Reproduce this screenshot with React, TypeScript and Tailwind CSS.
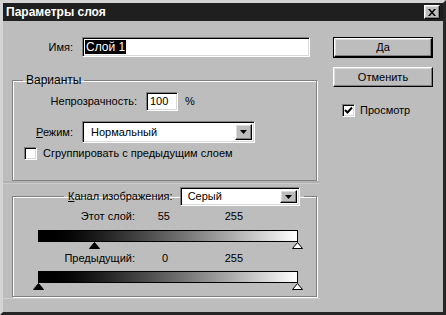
const sunken =
  "border border-t-[#808080] border-l-[#808080] border-r-white border-b-white shadow-[inset_1px_1px_0_#000,inset_-1px_-1px_0_#d8d8d8]";
const raised =
  "border border-t-white border-l-white border-r-black border-b-black shadow-[inset_-1px_-1px_0_#808080,inset_1px_1px_0_#dcdcdc]";
const etched = "border border-[#808080] shadow-[inset_1px_1px_0_#fff,1px_1px_0_#fff]";

function DropArrow() {
  return (
    <div className={`${raised} w-[17px] h-full flex items-center justify-center bg-[#bdbdbd]`}>
      <svg width="7" height="4" viewBox="0 0 7 4">
        <path d="M0 0H7L3.5 4Z" fill="#000" />
      </svg>
    </div>
  );
}

function Thumb({ at, hollow }: { at: number; hollow?: boolean }) {
  return (
    <svg
      className="absolute top-0"
      style={{ left: at - 5 }}
      width="11"
      height="7"
      viewBox="0 0 11 7"
    >
      <path d="M5.5 0.5L10.5 6.5H0.5Z" fill={hollow ? "#fff" : "#000"} stroke="#000" />
    </svg>
  );
}

function Slider({ lo, hi }: { lo: number; hi: number }) {
  return (
    <div className="ml-[25px] w-[260px]">
      <div className="h-[12px] border border-black bg-linear-to-r from-black to-white" />
      <div className="relative h-[7px]">
        <Thumb at={(lo / 255) * 259} />
        <Thumb at={(hi / 255) * 259} hollow />
      </div>
    </div>
  );
}

export default function App() {
  return (
    <div className="w-[446px] h-[315px] bg-[#bdbdbd] border-[3px] border-t-[#d4d4d4] border-l-[#d4d4d4] border-r-[#262626] border-b-[#262626] font-['Liberation_Sans',Arial,sans-serif] text-[11px] leading-[13px] text-black flex flex-col">
      <div className="h-[18px] bg-[#1f1f1f] flex items-center justify-between pl-[3px] pr-[3px]">
        <span className="text-white font-bold text-[12px]">Параметры слоя</span>
        <div className={`${raised} w-[16px] h-[14px] bg-[#bdbdbd] flex items-center justify-center`}>
          <svg width="8" height="7" viewBox="0 0 8 7">
            <path d="M0 0H2L4 2.5L6 0H8L5 3.5L8 7H6L4 4.5L2 7H0L3 3.5Z" fill="#000" />
          </svg>
        </div>
      </div>

      <div className="flex">
        <div className="w-[317px] flex flex-col">
          <div className="mt-[16px] flex items-center">
            <span className="w-[70px] text-right">Имя:</span>
            <div className={`${sunken} ml-[9px] w-[228px] h-[20px] bg-white flex items-center pl-[2px]`}>
              <span className="bg-black text-white px-[1px] leading-[14px] text-[12px]">Слой 1</span>
            </div>
          </div>

          <fieldset className={`${etched} ml-[9px] mt-[17px] w-[305px] pb-[20px]`}>
            <legend className="ml-[10px] px-[3px] text-[12px]">Варианты</legend>
            <div className="mt-[5px] flex items-center">
              <span className="w-[124px] text-right">Непрозрачность:</span>
              <div className={`${sunken} ml-[9px] w-[32px] h-[19px] bg-white flex items-center pl-[3px]`}>
                100
              </div>
              <span className="ml-[7px]">%</span>
            </div>
            <div className="mt-[10px] flex items-center">
              <span className="w-[60px] text-right">
                <span className="underline">Р</span>ежим:
              </span>
              <div className={`${sunken} ml-[9px] w-[173px] h-[22px] bg-white flex items-center justify-between p-[2px]`}>
                <span className="pl-[6px]">Нормальный</span>
                <DropArrow />
              </div>
            </div>
            <div className="mt-[4px] ml-[11px] flex items-center">
              <div className={`${sunken} w-[13px] h-[13px] bg-white`} />
              <span className="ml-[6px]">Сгруппировать с предыдущим слоем</span>
            </div>
          </fieldset>

          <div className="mt-[1px] h-[117px] border-y border-t-[#b2b2b2] border-b-[#cfcfcf] shadow-[inset_0_1px_0_#cacaca,0_-1px_0_#b2b2b2] pl-[9px] pt-[4px]">
            <fieldset className={`${etched} w-[305px] pb-[6px]`}>
              <legend className="ml-[51px] px-[4px] flex items-center">
                <span>
                  <span className="underline">К</span>анал изображения:
                </span>
                <div className={`${sunken} ml-[7px] w-[120px] h-[19px] bg-white flex items-center justify-between p-[2px]`}>
                  <span className="pl-[5px]">Серый</span>
                  <DropArrow />
                </div>
              </legend>
              <div className="mt-[4px] flex">
                <span className="w-[122px] text-right">Этот слой:</span>
                <span className="w-[35px] text-right">55</span>
                <span className="w-[73px] text-right">255</span>
              </div>
              <div className="mt-[7px]">
                <Slider lo={55} hi={255} />
              </div>
              <div className="mt-[3px] flex">
                <span className="w-[122px] text-right">Предыдущий:</span>
                <span className="w-[33px] text-right">0</span>
                <span className="w-[75px] text-right">255</span>
              </div>
              <div className="mt-[6px]">
                <Slider lo={0} hi={255} />
              </div>
            </fieldset>
          </div>
        </div>

        <div className="ml-[13px] w-[100px] flex flex-col">
          <div className="mt-[16px] h-[21px] border border-black">
            <div className={`${raised} h-full flex items-center justify-center`}>Да</div>
          </div>
          <div className={`${raised} mt-[9px] h-[20px] flex items-center justify-center`}>Отменить</div>
          <div className="mt-[17px] ml-[9px] flex items-center">
            <div className={`${sunken} w-[13px] h-[13px] bg-white flex items-center justify-center`}>
              <svg width="9" height="9" viewBox="0 0 9 9">
                <path d="M1 4L3.5 6.5L8 1.5" fill="none" stroke="#000" strokeWidth="2" />
              </svg>
            </div>
            <span className="ml-[5px]">Просмотр</span>
          </div>
        </div>
      </div>
    </div>
  );
}
